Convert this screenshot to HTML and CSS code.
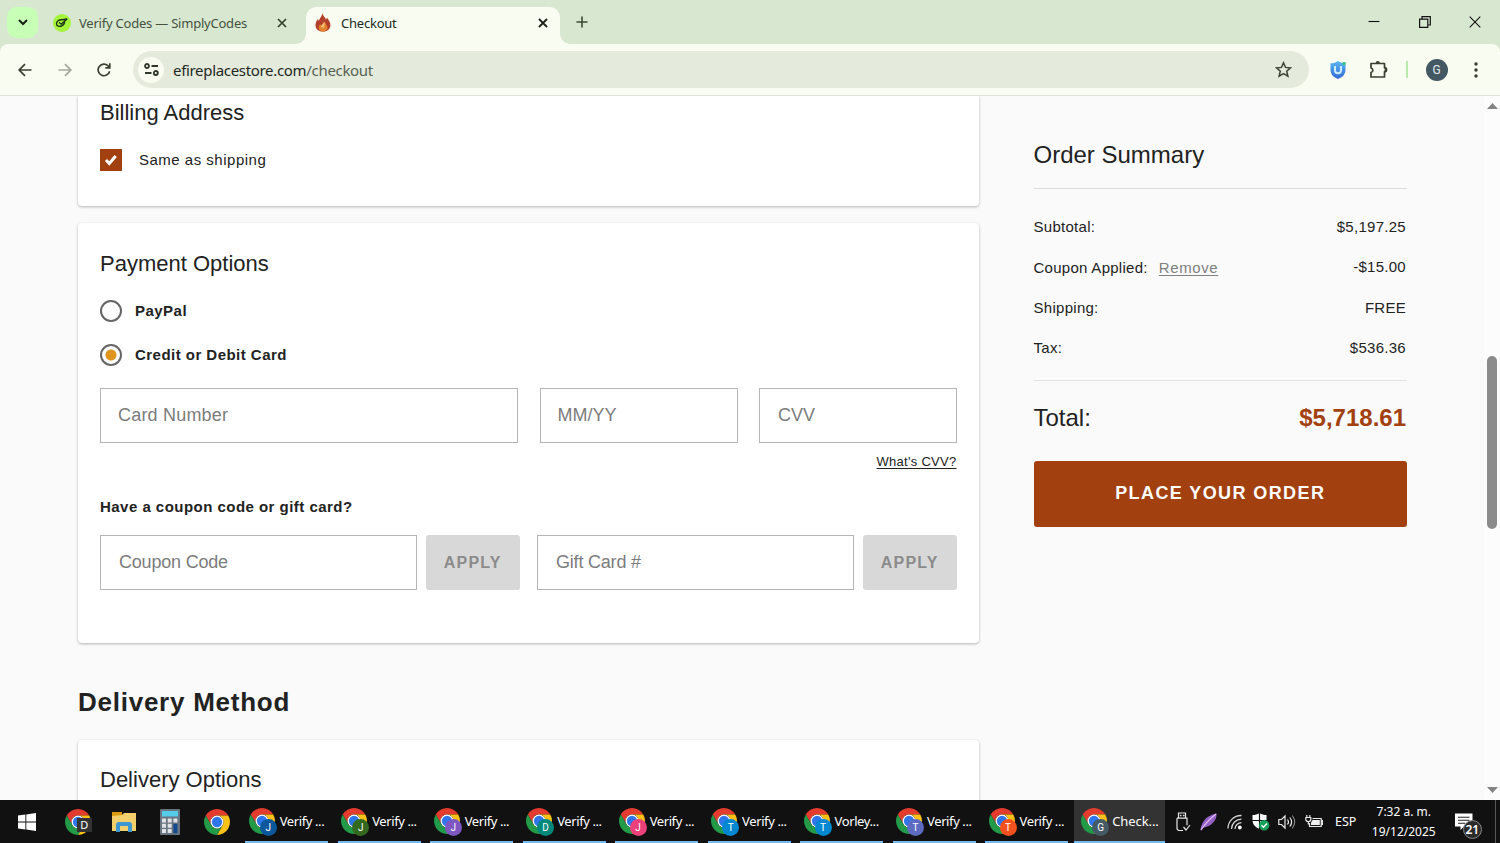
FILE: index.html
```html
<!DOCTYPE html>
<html lang="en">
<head>
<meta charset="utf-8">
<title>Checkout</title>
<link rel="stylesheet" href="styles.css">
</head>
<body>
<svg class="defs" width="0" height="0" aria-hidden="true">
  <symbol id="chrome" viewBox="2 2 44 44">
    <path fill="#e33b2e" d="M4.95 13A22 22 0 0 1 43.05 13L24 13A11 11 0 0 0 14.47 29.5Z"/>
    <path fill="#fbc116" d="M43.05 13A22 22 0 0 1 24 46L33.53 29.5A11 11 0 0 0 24 13Z"/>
    <path fill="#229a48" d="M24 46A22 22 0 0 1 4.95 13L14.47 29.5A11 11 0 0 0 33.53 29.5Z"/>
    <circle cx="24" cy="24" r="11" fill="#fff"/>
    <circle cx="24" cy="24" r="8.7" fill="#2f76ea"/>
  </symbol>
</svg>

<header class="tabstrip">
  <button class="tab-menu"><svg width="12" height="12" viewBox="0 0 12 12"><path d="M2 4l4 4 4-4" fill="none" stroke="#17210f" stroke-width="2"/></svg></button>
  <div class="tab">
    <svg class="favicon" width="18" height="18" viewBox="0 0 18 18"><circle cx="9" cy="9" r="9" fill="#a4f43c"/><path d="M9.500 5.800C5.500 5.200 3.600 7.500 3.500 9.700c0 2.600 3.200 3.400 5.700 1.900 1.800-1.100 2.500-2.700 2.200-4M6.500 8.800l1.700 1.400 5.600-5M9.500 5.800l4.300-.8" fill="none" stroke="#1c3310" stroke-width="1.400" stroke-linecap="round"/></svg>
    <span class="tab-title">Verify Codes — SimplyCodes</span>
    <svg class="tab-x" width="10" height="10" viewBox="0 0 10 10"><path d="M1 1l8 8M9 1L1 9" stroke="#33402c" stroke-width="1.700"/></svg>
  </div>
  <div class="tab tab-active">
    <svg class="favicon" width="16" height="19" viewBox="0 0 16 19"><path fill="#b2402a" d="M7.300 0c.5 3 3 4.300 3.700 6.600l1-1.800c2.200 2.700 3.700 5.300 3.400 8.200C15 16.500 12 18.500 8 18.500S.8 16.300.5 12.700C.3 9.900 1.700 8 2.700 6l1.200 2C4.500 5 7.200 3.500 7.300 0z"/><path fill="#e3812a" d="M9 7.500c0 2.500 3.500 4 3.500 7 0 2.500-2 4-4.500 4s-4.500-1.500-4.300-4c.1-1.500.9-2.500 1.300-3.500l1.300 1.500C7.500 11 8.800 9.800 9 7.500z"/><path fill="#f5c080" d="M9.200 8.500c0 2-3.200 3.500-3.500 6l1.600-.7L8 16c1-2 2.400-4.500 1.200-7.500z"/></svg>
    <span class="tab-title">Checkout</span>
    <svg class="tab-x" width="10" height="10" viewBox="0 0 10 10"><path d="M1 1l8 8M9 1L1 9" stroke="#1c2117" stroke-width="1.800"/></svg>
  </div>
  <svg class="new-tab" width="12" height="12" viewBox="0 0 12 12"><path d="M6 .5v11M.5 6h11" stroke="#3a4a34" stroke-width="1.600"/></svg>
  <div class="window-controls">
    <svg width="12" height="12" viewBox="0 0 12 12"><path d="M.5 5.500h11" stroke="#111" stroke-width="1.100"/></svg>
    <svg width="12" height="12" viewBox="0 0 12 12"><path d="M.6 3.200h8.200v8.200H.6zM3 3.200V.7h8.300V9H8.800" fill="none" stroke="#111" stroke-width="1.200"/></svg>
    <svg width="12" height="12" viewBox="0 0 12 12"><path d="M.7.700l10.600 10.600M11.300.7L.7 11.300" stroke="#111" stroke-width="1.100"/></svg>
  </div>
</header>

<div class="toolbar">
  <svg class="nav-icon" width="14" height="14" viewBox="0 0 14 14"><path d="M13.500 7H1.500M7 1.200L1.200 7 7 12.800" fill="none" stroke="#39402f" stroke-width="1.700"/></svg>
  <svg class="nav-icon" width="14" height="14" viewBox="0 0 14 14"><path d="M.5 7h12M7 1.200L12.800 7 7 12.800" fill="none" stroke="#a2a99b" stroke-width="1.700"/></svg>
  <svg class="nav-icon" width="14" height="14" viewBox="0 0 14 14"><path d="M12.600 8.200A5.800 5.800 0 1 1 11 2.800l1.600 1.600M12.800.3v4.500H8.300" fill="none" stroke="#39402f" stroke-width="1.700"/></svg>
  <div class="omnibox">
    <span class="site-info"><svg width="15" height="13" viewBox="0 0 15 13"><g fill="none" stroke="#30382b" stroke-width="1.800"><circle cx="3" cy="3" r="2"/><path d="M7.500 3H14M1 10h6.500"/><circle cx="11.800" cy="10" r="2"/></g></svg></span>
    <span class="url">efireplacestore.com<span class="url-path">/checkout</span></span>
    <svg class="star" width="17" height="17" viewBox="0 0 17 17"><path d="M8.500 1.800l2 4.600 5 .5-3.800 3.300 1.200 4.900-4.400-2.600-4.400 2.600 1.200-4.900L1.500 6.900l5-.5z" fill="none" stroke="#3c4436" stroke-width="1.500"/></svg>
  </div>
  <svg class="ext" width="16" height="18" viewBox="0 0 16 18"><defs><linearGradient id="sh" x1="0" y1="0" x2="0" y2="1"><stop offset="0" stop-color="#58b7f0"/><stop offset="1" stop-color="#3469d7"/></linearGradient></defs><path d="M8 0c2 1.700 5 2.200 7.500 2.300V9c0 4.500-3.500 7.500-7.500 9C4 16.500.5 13.500.5 9V2.300C3 2.200 6 1.700 8 0z" fill="url(#sh)"/><path d="M5 5v4.300a3 3 0 0 0 6 0V5" fill="none" stroke="#c9edff" stroke-width="2"/><circle cx="14" cy="2.500" r="1.800" fill="#42c58b"/></svg>
  <svg class="puzzle" width="19" height="19" viewBox="0 0 19 19"><path d="M2 3.500h13.500v4.200a2 2 0 0 1 0 4V17H2v-4.500a2.300 2.300 0 0 0 0-4.500z" fill="none" stroke="#39402f" stroke-width="1.700" stroke-linejoin="round"/><path d="M6.700 3a2.100 2.100 0 0 1 4.200 0zM15.700 7.800a2.100 2.100 0 0 1 0 4.200z" fill="#39402f"/></svg>
  <span class="divider"></span>
  <span class="avatar">G</span>
  <svg class="dots" width="4" height="16" viewBox="0 0 4 16"><g fill="#363d30"><circle cx="2" cy="2" r="1.700"/><circle cx="2" cy="8" r="1.700"/><circle cx="2" cy="14" r="1.700"/></g></svg>
</div>

<div class="page">
  <main class="main">
    <section class="card billing">
      <h2 class="card-title">Billing Address</h2>
      <label class="same"><span class="checkbox"><svg width="14" height="12" viewBox="0 0 14 12"><path d="M2 6l3.300 3.500L11.700 2" fill="none" stroke="#fff" stroke-width="3"/></svg></span><span class="same-label">Same as shipping</span></label>
    </section>
    <section class="card payment">
      <h2 class="card-title">Payment Options</h2>
      <label class="option"><span class="radio"></span><span class="option-label">PayPal</span></label>
      <label class="option"><span class="radio radio-on"></span><span class="option-label">Credit or Debit Card</span></label>
      <div class="card-fields">
        <input class="field number" placeholder="Card Number">
        <input class="field" placeholder="MM/YY">
        <input class="field cvv" placeholder="CVV">
      </div>
      <a class="cvv-link">What's CVV?</a>
      <h3 class="coupon-title">Have a coupon code or gift card?</h3>
      <div class="coupon-fields">
        <div class="code"><input class="field" placeholder="Coupon Code"><button class="apply">APPLY</button></div>
        <div class="code"><input class="field" placeholder="Gift Card #"><button class="apply">APPLY</button></div>
      </div>
    </section>
    <h1 class="section-title">Delivery Method</h1>
    <section class="card delivery">
      <h2 class="card-title">Delivery Options</h2>
    </section>
  </main>
  <aside class="summary">
    <h2 class="summary-title">Order Summary</h2>
    <dl class="lines">
      <div class="line"><dt>Subtotal:</dt><dd>$5,197.25</dd></div>
      <div class="line"><dt>Coupon Applied:<a class="remove">Remove</a></dt><dd class="discount">-$15.00</dd></div>
      <div class="line line-shipping"><dt>Shipping:</dt><dd>FREE</dd></div>
      <div class="line"><dt>Tax:</dt><dd>$536.36</dd></div>
    </dl>
    <div class="total"><span>Total:</span><strong class="amount">$5,718.61</strong></div>
    <button class="place">PLACE YOUR ORDER</button>
  </aside>
  <div class="scrollbar">
    <svg width="11" height="6" viewBox="0 0 11 6"><path d="M0 6L5.500 0 11 6z" fill="#848484"/></svg>
    <span class="thumb"></span>
    <svg width="11" height="6" viewBox="0 0 11 6"><path d="M0 0L5.500 6 11 0z" fill="#848484"/></svg>
  </div>
</div>

<footer class="taskbar">
  <div class="pin start"><svg width="18" height="18" viewBox="0 0 18 18"><path fill="#fff" d="M0 2.600L7.400 1.500V8.500H0zM8.300 1.400L18 0v8.500H8.300zM0 9.400h7.400v7L0 15.400zM8.300 9.400H18V18l-9.700-1.400z"/></svg></div>
  <div class="pin"><span class="app"><svg class="chrome"><use href="#chrome"/></svg><span class="square-badge">D</span></span></div>
  <div class="pin"><svg width="24" height="22" viewBox="0 0 24 22"><path fill="#d99a10" d="M0 1h10v5H0z"/><path fill="#f4d06c" d="M0 5l10-1 2-2h12v18H0z"/><path fill="#3d97d3" d="M4 21v-7q0-3 3-3h10q3 0 3 3v7h-4v-6H8v6z"/></svg></div>
  <div class="pin"><svg width="20" height="26" viewBox="0 0 20 26"><rect width="20" height="26" rx="1" fill="#68747f"/><rect x="2" y="2" width="16" height="5.500" fill="#55cdea"/><g fill="#dfe3e6"><path d="M2 9.500h4v4H2zM7.700 9.500h4v4h-4zM13.400 9.500h4v4h-4zM2 14.800h4v4H2zM7.700 14.800h4v4h-4zM2 20.100h4v4H2zM7.700 20.100h4v4h-4z"/></g><path fill="#12498f" d="M13.400 14.800h4v9.300h-4z"/></svg></div>
  <div class="pin"><svg class="chrome"><use href="#chrome"/></svg></div>
  <div class="tasks">
    <div class="task"><span class="app"><svg class="chrome"><use href="#chrome"/></svg><span class="badge b-blue">J</span></span>Verify ...</div>
    <div class="task"><span class="app"><svg class="chrome"><use href="#chrome"/></svg><span class="badge b-green">J</span></span>Verify ...</div>
    <div class="task"><span class="app"><svg class="chrome"><use href="#chrome"/></svg><span class="badge b-purple">J</span></span>Verify ...</div>
    <div class="task"><span class="app"><svg class="chrome"><use href="#chrome"/></svg><span class="badge b-teal">D</span></span>Verify ...</div>
    <div class="task"><span class="app"><svg class="chrome"><use href="#chrome"/></svg><span class="badge b-pink">J</span></span>Verify ...</div>
    <div class="task"><span class="app"><svg class="chrome"><use href="#chrome"/></svg><span class="badge b-sky">T</span></span>Verify ...</div>
    <div class="task"><span class="app"><svg class="chrome"><use href="#chrome"/></svg><span class="badge b-sky">T</span></span>Vorley...</div>
    <div class="task"><span class="app"><svg class="chrome"><use href="#chrome"/></svg><span class="badge b-indigo">T</span></span>Verify ...</div>
    <div class="task"><span class="app"><svg class="chrome"><use href="#chrome"/></svg><span class="badge b-orange">T</span></span>Verify ...</div>
  </div>
  <div class="task task-active"><span class="app"><svg class="chrome"><use href="#chrome"/></svg><span class="badge b-slate">G</span></span>Check...</div>
  <div class="tray">
    <span class="t-usb"><svg width="16" height="20" viewBox="0 0 16 20"><g fill="none" stroke="#e8e8e8" stroke-width="1.200"><path d="M3.500 6V1h7v5M2 6.200h10v7M8 18.500H3.500L2 17V6.200"/><path d="M8.500 15l2.500 3 4-5"/></g><path fill="#e8e8e8" d="M5 2.800h1.500v1.500H5zM8 2.800h1.500v1.500H8z"/></svg></span>
    <span class="t-feather"><svg width="18" height="18" viewBox="0 0 18 18"><path fill="#9561c5" d="M16.500.5c.5 5-2.500 9-6 11.500-2.500 1.800-5 2-7 2.500L1.200 17.500.5 17C1 11 4.500 6 8.500 3.500 11.500 1.800 14 1 16.500.5z"/><path d="M1 17C5 11 9 6.500 16 1" fill="none" stroke="#dfbdf3" stroke-width="1.200"/></svg></span>
    <span class="t-wifi"><svg width="16" height="16" viewBox="0 0 16 16"><g fill="none" stroke="#d5d5d5" stroke-width="1.300"><path d="M1 14.500A13 13 0 0 1 14.500 1.500M4.500 15A10 10 0 0 1 14.500 5.200M8 15A6.500 6.500 0 0 1 14.500 8.700"/></g><circle cx="12.800" cy="13.500" r="1.900" fill="#fff"/></svg></span>
    <span class="t-shield"><svg width="18" height="18" viewBox="0 0 18 18"><path fill="#fff" d="M7.500 0c2 1.500 4.500 2 7 2v5c0 4.500-3 7.300-7 9-4-1.700-7-4.500-7-9V2c2.500 0 5-.5 7-2z"/><path d="M7.500 0v16M0 7.500h15" stroke="#111" stroke-width="1.200"/><circle cx="12.200" cy="12.300" r="5.200" fill="#18a05a"/><path d="M9.500 12.300l2 2 3.500-3.800" fill="none" stroke="#fff" stroke-width="1.400"/></svg></span>
    <span class="t-sound"><svg width="18" height="16" viewBox="0 0 18 16"><g fill="none" stroke="#e8e8e8" stroke-width="1.200"><path d="M.8 5.500h2.700L7 2v12l-3.500-3.500H.8zM9.500 5.500q2 2.500 0 5M11.800 3.500q3.600 4.500 0 9"/><path stroke="#858585" d="M14.200 1.500q5 6.500 0 13"/></g></svg></span>
    <span class="t-battery"><svg width="18" height="14" viewBox="0 0 18 14"><g fill="none" stroke="#e8e8e8" stroke-width="1.200"><path d="M7.500 3.500h8.700v8H4.500V8M16.200 5.700h1.300v3.600h-1.300M1.800 0v2.500M4.800 0v2.500M.8 2.500h5v2q0 2-2.500 2t-2.500-2zM3.300 6.500v3"/></g><path fill="#eee" d="M7.500 5h7.300v5H6V7.500z"/></svg></span>
    <span class="t-lang">ESP</span>
    <div class="clock"><span>7:32 a. m.</span><span class="date">19/12/2025</span></div>
    <span class="t-note"><svg width="18" height="18" viewBox="0 0 18 18"><path fill="#fff" d="M0 .5h17.500v13H9L5.500 17v-3.500H0z"/><path d="M3 4.200h11.500M3 7.200h11.500M3 10.200h7" stroke="#222" stroke-width="1.100"/></svg><span class="count">21</span></span>
  </div>
</footer>
</body>
</html>
```
FILE: styles.css
```css
* { box-sizing: border-box; }
body {
  margin: 0;
  width: 1500px;
  height: 843px;
  overflow: hidden;
  display: flex;
  flex-direction: column;
  font-family: "Liberation Sans", Arial, sans-serif;
  color: #222;
  background: #fafafa;
}
h1, h2, h3, dl, dd { margin: 0; font-weight: 400; }
svg { display: block; flex: none; }
button { border: 0; padding: 0; font-family: inherit; }
.defs { position: absolute; }

/* Tab strip */
.tabstrip {
  position: relative;
  z-index: 1;
  height: 44px;
  flex: none;
  display: flex;
  align-items: center;
  padding-left: 7px;
  background: #d8e7cf;
  font-family: "Noto Sans", sans-serif;
}
.tab-menu {
  width: 31px;
  height: 31px;
  border-radius: 10px;
  background: #c8ffb7;
  display: grid;
  place-items: center;
}
.tab {
  width: 268px;
  height: 37px;
  margin-top: 7px;
  padding: 0 19px 6px 15px;
  display: flex;
  align-items: center;
  color: #45523f;
}
.tab-title { flex: 1; margin-left: 8px; font-size: 13px; line-height: 20px; letter-spacing: -.22px; white-space: nowrap; }
.tab-active {
  position: relative;
  width: 254px;
  padding: 0 12px 6px 9px;
  border-radius: 10px 10px 0 0;
  background: #f8fcf1;
  color: #22291d;
}
.tab-active .tab-title { margin-left: 10px; }
.tab-active::before, .tab-active::after {
  content: "";
  position: absolute;
  bottom: 0;
  width: 10px;
  height: 10px;
}
.tab-active::before { left: -10px; background: radial-gradient(circle at 0 0, transparent 9.5px, #f8fcf1 10px); }
.tab-active::after { right: -10px; background: radial-gradient(circle at 100% 0, transparent 9.5px, #f8fcf1 10px); }
.new-tab { margin-left: 16px; }
.window-controls { margin-left: auto; padding-right: 19px; display: flex; gap: 38.5px; }

/* Toolbar */
.toolbar {
  position: relative;
  height: 52px;
  flex: none;
  display: flex;
  align-items: center;
  padding: 0 22px 0 18px;
  border-bottom: 1px solid #dfe2da;
  background: #f8fcf1;
  border-radius: 8px 8px 0 0;
}
.toolbar::before {
  content: "";
  position: absolute;
  inset: 0 0 40px;
  z-index: -1;
  background: #d8e7cf;
}
.nav-icon { margin-right: 25.5px; }
.omnibox {
  width: 1176px;
  height: 37px;
  margin-left: -3.5px;
  padding: 0 17px 0 5px;
  border-radius: 19px;
  background: #e5ebdc;
  display: flex;
  align-items: center;
}
.site-info {
  width: 26px;
  height: 26px;
  border-radius: 50%;
  background: #f8fcf1;
  display: grid;
  place-items: center;
}
.url { flex: 1; margin-left: 9px; font: 15px/22px "Noto Sans", sans-serif; letter-spacing: -.32px; color: #22271f; }
.url-path { color: #586152; }
.ext { margin-left: 21px; }
.puzzle { margin-left: 22.5px; }
.divider { width: 2px; height: 17px; margin-left: 18px; background: #b9ecaa; }
.avatar {
  width: 22px;
  height: 22px;
  margin-left: 18px;
  border-radius: 50%;
  background: #445863;
  color: #e7edf0;
  font: 12px/22px Roboto, sans-serif;
  text-align: center;
}
.dots { margin-left: auto; }

/* Page */
.page { flex: 1; min-height: 0; display: flex; overflow: hidden; background: #fafafa; }
.main { width: 979px; padding-left: 78px; flex: none; }
.card {
  padding: 0 22px;
  background: #fff;
  border-radius: 4px;
  box-shadow: 0 1px 3px rgba(0, 0, 0, .28);
}
.card-title { font-size: 22px; line-height: 28px; }
.billing { height: 110px; padding-top: 3px; border-radius: 0 0 4px 4px; }
.same { display: flex; align-items: center; margin-top: 22px; font-size: 15px; letter-spacing: .5px; }
.checkbox { width: 22px; height: 22px; background: #a3400f; display: grid; place-items: center; }
.same-label { margin-left: 17px; padding-bottom: 2px; }
.payment { height: 420px; margin-top: 17px; padding-top: 27px; }
.option { display: flex; align-items: center; gap: 13px; height: 22px; margin-top: 22px; font-size: 15px; font-weight: 700; letter-spacing: .47px; }
.option-label { padding-bottom: 1px; }
.radio { width: 22px; height: 22px; border: 2px solid #666; border-radius: 50%; }
.radio-on { background: radial-gradient(circle, #df941e 5px, #fff 6px); }
.card-fields { display: grid; grid-template-columns: 418px 198px 198px; gap: 21.5px; margin-top: 22px; }
.field {
  min-width: 0;
  height: 55px;
  padding: 0 17px;
  border: 1px solid #b5b5b5;
  border-radius: 0;
  background: #fff;
  font: 18px "Liberation Sans", Arial, sans-serif;
}
.field::placeholder { color: #7c7c7c; opacity: 1; }
.number { letter-spacing: .2px; }
.cvv { padding-left: 18px; }
.cvv-link { display: block; margin-top: 9px; padding-right: .5px; text-align: right; font-size: 13px; line-height: 20px; letter-spacing: .28px; text-decoration: underline; text-underline-offset: 2px; }
.coupon-title { margin-top: 25px; font-size: 15px; font-weight: 700; line-height: 20px; letter-spacing: .47px; }
.coupon-fields { display: flex; gap: 17px; margin-top: 18px; }
.code { display: grid; grid-template-columns: 317px 94.5px; column-gap: 8.5px; }
.code .field { padding: 0 18px; letter-spacing: -.2px; }
.apply { border-radius: 3px; background: #d8d8d8; color: #8b8b8b; font-size: 16px; font-weight: 700; letter-spacing: 1.2px; }
.section-title { margin-top: 43px; font-size: 26px; font-weight: 700; line-height: 32px; letter-spacing: .75px; }
.delivery { height: 80px; margin-top: 22px; padding-top: 26px; }

/* Order summary */
.summary { width: 373.5px; margin-left: 54.5px; flex: none; }
.summary-title { padding: 43px 0 17px; border-bottom: 1px solid #ddd; font-size: 24px; line-height: 32px; }
.lines { padding-top: 28px; height: 192px; border-bottom: 1px solid #e3e3e3; font-size: 15px; line-height: 20px; letter-spacing: .28px; }
.line { display: flex; justify-content: space-between; margin-bottom: 20.5px; padding-right: 1px; }
.discount { margin-top: -1px; }
.line-shipping { margin-bottom: 19.5px; }
.remove { margin-left: 11px; color: #808080; letter-spacing: .6px; text-decoration: underline; text-underline-offset: 2px; }
.total { display: flex; justify-content: space-between; margin-top: 21px; padding-right: 1px; font-size: 24px; line-height: 32px; }
.amount { color: #a3400f; }
.place {
  width: 100%;
  height: 66px;
  margin-top: 26.5px;
  border-radius: 3px;
  background: #a3400f;
  color: #fff;
  font-size: 18px;
  font-weight: 700;
  letter-spacing: 1.4px;
}
.scrollbar {
  width: 16px;
  margin-left: auto;
  padding: 7px 0;
  background: #fcfcfc;
  display: flex;
  flex-direction: column;
  align-items: center;
  justify-content: space-between;
}
.thumb { width: 10px; height: 173px; margin-bottom: 12px; border-radius: 5px; background: #8b8b8b; }

/* Taskbar */
.taskbar {
  height: 43px;
  flex: none;
  display: flex;
  background: #111;
  color: #fff;
  font: 13px "Noto Sans", sans-serif;
}
.pin { width: 46.3px; flex: none; display: grid; place-items: center; }
.start { width: 54.5px; }
.chrome { width: 26px; height: 26px; }
.app { position: relative; flex: none; }
.square-badge {
  position: absolute;
  left: 12px;
  top: 9px;
  width: 15px;
  height: 14px;
  background: #333;
  font-size: 11px;
  line-height: 14px;
  text-align: center;
}
.tasks { display: flex; gap: 9.3px; margin-left: 5.5px; }
.task {
  width: 83.2px;
  height: 43px;
  flex: none;
  padding: 1px 0 0 3.5px;
  border-bottom: 2px solid #76b9ed;
  display: flex;
  align-items: center;
  gap: 5px;
  letter-spacing: -.4px;
  white-space: nowrap;
}
.task-active { width: 91px; margin-left: 6px; padding-left: 7px; background: #333; letter-spacing: -.1px; }
.badge {
  position: absolute;
  left: 11px;
  top: 11px;
  width: 17px;
  height: 17px;
  border-radius: 50%;
  font: 10px/17px Roboto, sans-serif;
  letter-spacing: 0;
  text-align: center;
}
.b-blue { background: #0b579c; }
.b-green { background: #33691e; }
.b-purple { background: #7e57c2; }
.b-teal { background: #00897b; }
.b-pink { background: #ec407a; }
.b-sky { background: #0288d1; }
.b-indigo { background: #5c6bc0; }
.b-orange { background: #f4511e; }
.b-slate { background: #455a64; }

.tray {
  margin-left: 4.5px;
  display: grid;
  grid-template-columns: 26px 26px 27px 25px 26px 28px 36px 80px 52px;
  height: 43px;
  flex: none;
}
.tray > * { display: grid; place-items: center; }
.t-lang { font-size: 12.5px; }
.clock { align-content: center; justify-items: center; font-size: 12px; line-height: 20px; }
.tray .t-note { position: relative; border-right: 1px solid #555; justify-content: start; padding-left: 11px; }
.count {
  position: absolute;
  left: 19px;
  top: 20px;
  width: 19px;
  height: 19px;
  border: 1px solid #888;
  border-radius: 50%;
  background: #2b2b2b;
  font-size: 12px;
  font-weight: 600;
  line-height: 17px;
  text-align: center;
}
```
